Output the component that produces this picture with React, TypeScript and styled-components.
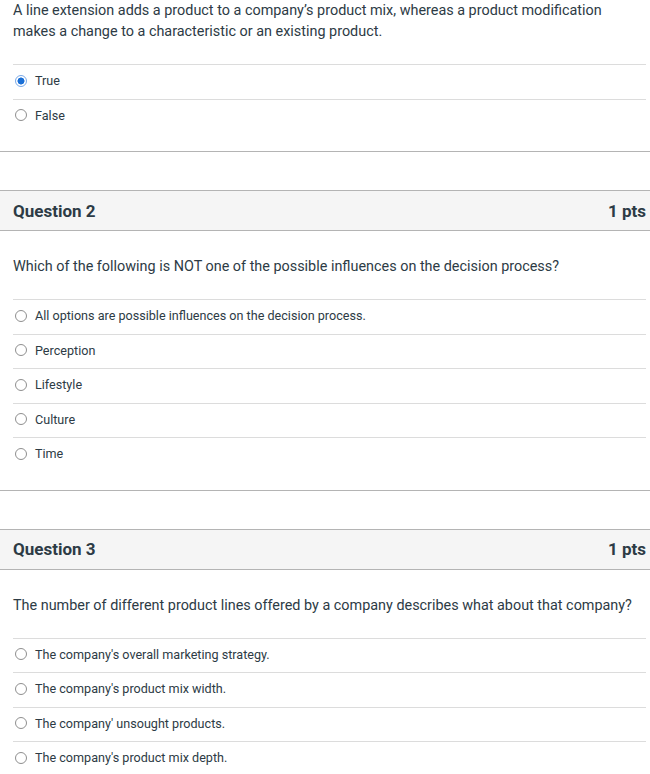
import React from "react";
import styled, { createGlobalStyle } from "styled-components";

const GlobalStyle = createGlobalStyle`
    html, body {
        margin: 0;
        padding: 0;
        background: #fff;
    }
    body {
        font-family: Roboto, "Liberation Sans", Arial, sans-serif;
        color: #2d3b45;
        overflow: hidden;
    }
`;

const Page = styled.div`
    width: 650px;
    display: flex;
    flex-direction: column;
    gap: 38px;
`;

const Block = styled.section`
    border-bottom: 1px solid #b4b4b4;
`;

const Header = styled.header`
    height: 39px;
    display: flex;
    align-items: center;
    justify-content: space-between;
    padding: 0 4px 0 13px;
    background: #f5f5f5;
    border-top: 1px solid #b4b4b4;
    border-bottom: 1px solid #b4b4b4;
`;

const HeaderTitle = styled.h2`
    margin: 0;
    font-size: 17px;
    font-weight: 700;
    color: #2d3b45;
`;

const Points = styled.span`
    font-size: 17px;
    font-weight: 700;
    color: #2d3b45;
`;

const Body = styled.div<{ cropped?: boolean }>`
    padding: ${(p) => (p.cropped ? "0" : "25px")} 4px 18px 13px;
`;

const Prompt = styled.p`
    margin: 0 0 22px;
    font-size: 14.4px;
    line-height: 21px;
    color: #2d3b45;
`;

const Answers = styled.ul`
    list-style: none;
    margin: 0;
    padding: 0;
`;

const Answer = styled.li`
    height: 31.5px;
    box-sizing: content-box;
    display: flex;
    align-items: center;
    gap: 8px;
    padding: 0 0 2px 2px;
    border-top: 1px solid #dcdcdc;
    font-size: 12.6px;
    color: #2d3b45;
`;

const Radio = styled.span<{ checked?: boolean }>`
    width: 12px;
    height: 12px;
    box-sizing: border-box;
    border-radius: 50%;
    border: 1px solid ${(p) => (p.checked ? "#7aa9e8" : "#8f8f8f")};
    background: ${(p) =>
        p.checked ? "radial-gradient(circle, #1a6fd6 0 3.2px, #fff 3.8px)" : "#fff"};
    flex-shrink: 0;
`;

interface IQuestion {
    title?: string;
    prompt: string;
    answers: string[];
    selected?: number;
}

const questions: IQuestion[] = [
    {
        prompt:
            "A line extension adds a product to a company’s product mix, whereas a product modification makes a change to a characteristic or an existing product.",
        answers: ["True", "False"],
        selected: 0
    },
    {
        title: "Question 2",
        prompt:
            "Which of the following is NOT one of the possible influences on the decision process?",
        answers: [
            "All options are possible influences on the decision process.",
            "Perception",
            "Lifestyle",
            "Culture",
            "Time"
        ]
    },
    {
        title: "Question 3",
        prompt:
            "The number of different product lines offered by a company describes what about that company?",
        answers: [
            "The company's overall marketing strategy.",
            "The company's product mix width.",
            "The company' unsought products.",
            "The company's product mix depth."
        ]
    }
];

function Question({ title, prompt, answers, selected }: IQuestion) {
    return (
        <Block>
            {title && (
                <Header>
                    <HeaderTitle>{title}</HeaderTitle>
                    <Points>1 pts</Points>
                </Header>
            )}
            <Body cropped={!title}>
                <Prompt>{prompt}</Prompt>
                <Answers>
                    {answers.map((a, i) => (
                        <Answer key={a}>
                            <Radio checked={i === selected} />
                            {a}
                        </Answer>
                    ))}
                </Answers>
            </Body>
        </Block>
    );
}

export default function App() {
    return (
        <>
            <GlobalStyle />
            <Page>
                {questions.map((q, i) => (
                    <Question key={i} {...q} />
                ))}
            </Page>
        </>
    );
}
